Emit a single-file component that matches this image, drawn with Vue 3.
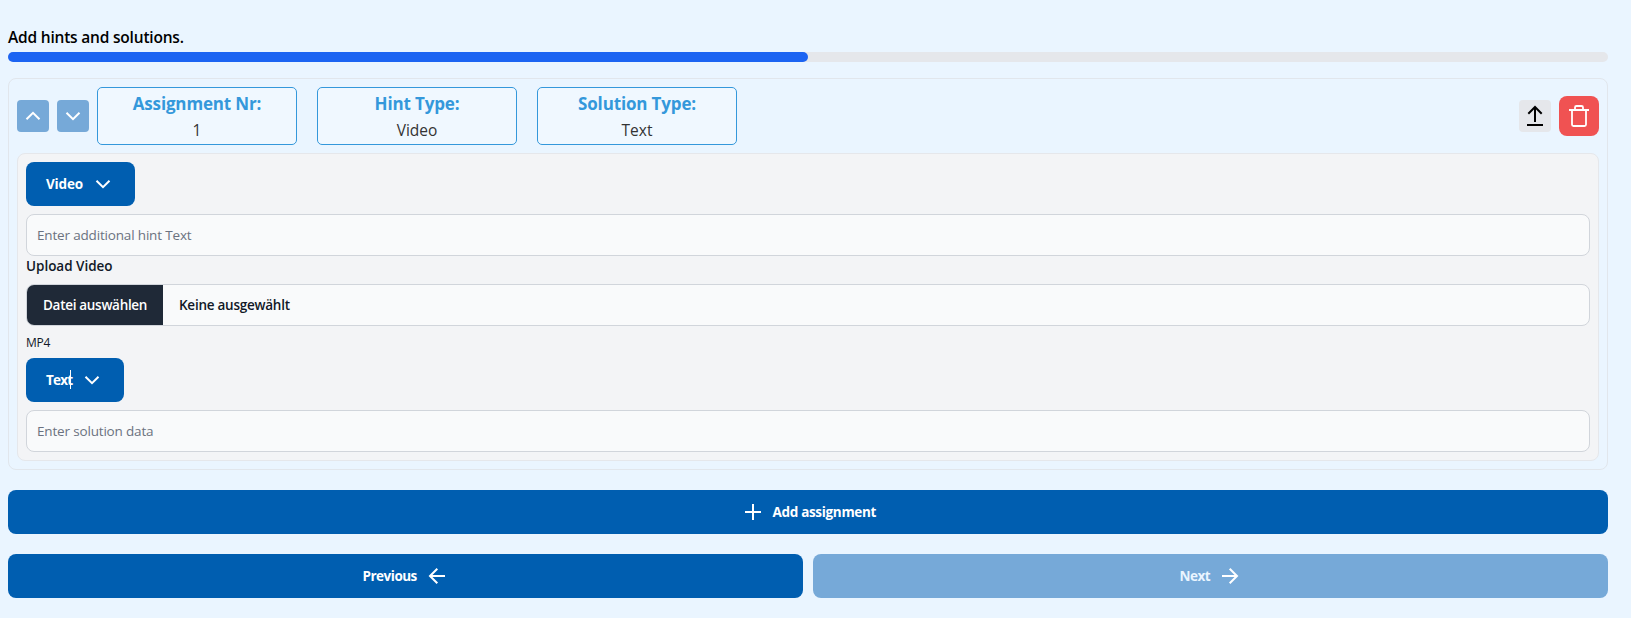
<script setup>
const summary = [
  { label: 'Assignment Nr:', value: '1' },
  { label: 'Hint Type:', value: 'Video' },
  { label: 'Solution Type:', value: 'Text' },
]
const progress = 50
</script>

<template>
  <main class="page">
    <h1 class="title"><span>Add hints and solutions.</span></h1>
    <div class="track"><div class="fill" :style="{ width: progress + '%' }"></div></div>

    <section class="card">
      <header class="head">
        <button class="sq" aria-label="Move up">
          <svg width="16" height="16" viewBox="0 0 16 16"><path d="M1.5 11.2 8 4.8l6.5 6.4" /></svg>
        </button>
        <button class="sq" aria-label="Move down">
          <svg width="16" height="16" viewBox="0 0 16 16"><path d="M1.5 4.8 8 11.2l6.5-6.4" /></svg>
        </button>
        <div class="boxes">
          <div v-for="s in summary" :key="s.label" class="box">
            <div class="label">{{ s.label }}</div>
            <div class="value">{{ s.value }}</div>
          </div>
        </div>
        <button class="sq upload" aria-label="Upload">
          <svg width="18" height="22" viewBox="0 0 18 22"><path d="M9 17V2.2M2.3 8.7 9 2l6.7 6.7M1 20h16" /></svg>
        </button>
        <button class="trash" aria-label="Delete">
          <svg width="22" height="24" viewBox="0 0 22 24"><path d="M1 6h20M4 6v14.5A1.5 1.5 0 0 0 5.5 22h11a1.5 1.5 0 0 0 1.5-1.5V6M7 5.8V3.5A1.5 1.5 0 0 1 8.5 2h5A1.5 1.5 0 0 1 15 3.5v2.3" /></svg>
        </button>
      </header>

      <div class="body">
        <button class="btn drop video">
          <span class="t-video">Video</span>
          <svg width="16" height="16" viewBox="0 0 16 16"><path d="M1.5 4.8 8 11.2l6.5-6.4" /></svg>
        </button>
        <div class="input">Enter additional hint Text</div>
        <div class="upload-label">Upload Video</div>
        <div class="file">
          <div class="choose">Datei auswählen</div>
          <span class="none">Keine ausgewählt</span>
        </div>
        <div class="format">MP4</div>
        <button class="btn drop text">
          <span class="t-text">Text<i class="caret"></i></span>
          <svg width="16" height="16" viewBox="0 0 16 16"><path d="M1.5 4.8 8 11.2l6.5-6.4" /></svg>
        </button>
        <div class="input">Enter solution data</div>
      </div>
    </section>

    <button class="btn wide add">
      <svg width="16" height="16" viewBox="0 0 16 16"><path d="M8 0v16M0 8h16" /></svg>
      <span class="t-add">Add assignment</span>
    </button>
    <nav class="nav">
      <button class="btn wide">
        <span class="t-prev">Previous</span>
        <svg width="16" height="16" viewBox="0 0 16 16"><path d="M16 8H1M8.3.7 1 8l7.3 7.3" /></svg>
      </button>
      <button class="btn wide off">
        <span class="t-next">Next</span>
        <svg width="16" height="16" viewBox="0 0 16 16"><path d="M0 8h15M7.7.7 15 8l-7.3 7.3" /></svg>
      </button>
    </nav>
  </main>
</template>

<style>
html, body { background: #eaf5ff; }
body { overflow: hidden; }
</style>

<style scoped>
* { box-sizing: border-box; }
.page {
  width: 1616px; height: 618px; padding: 24px 8px 0;
  font-family: "Open Sans", "Noto Sans", sans-serif; font-size: 14px; color: #111827;
}
span { white-space: nowrap; }
button { border: 0; margin: 0; padding: 0; font: inherit; color: inherit; display: flex; align-items: center; justify-content: center; }
svg { display: block; flex: none; fill: none; stroke: #fff; stroke-width: 2; overflow: visible; }
.title { margin: 0; height: 28px; font-size: 15.5px; line-height: 26px; font-weight: 600; color: #000; letter-spacing: -0.2px; }
.track { height: 10px; border-radius: 5px; background: #e5e7eb; }
.fill { height: 10px; border-radius: 5px; background: #1c64f2; }
.card { margin-top: 16px; height: 392px; border: 1px solid #e1e6ec; border-radius: 8px; padding: 8px; }
.head { display: flex; align-items: center; gap: 8px; height: 58px; }
.sq { width: 32px; height: 32px; border-radius: 4px; background: #76a9d8; }
.boxes { display: flex; gap: 20px; flex: 1; }
.box { width: 200px; height: 58px; border: 1px solid #3498db; border-radius: 5px; background: #f0f8ff; text-align: center; }
.label { height: 30px; line-height: 32px; font-size: 17px; font-weight: 700; color: #3498db; letter-spacing: -0.15px; }
.value { height: 26px; line-height: 25px; font-size: 15.5px; color: #333; }
.upload { background: #e5e7eb; }
.upload svg { stroke: #000; }
.trash { width: 40px; height: 40px; border-radius: 8px; background: #f05252; }
.trash svg { stroke-width: 1.8; }
.body { margin-top: 8px; height: 308px; border: 1px solid #e5e7eb; border-radius: 8px; background: #f3f4f6; padding: 8px; }
.btn { height: 44px; border-radius: 8px; background: #005eb0; color: #fff; font-size: 13.5px; font-weight: 700; letter-spacing: -0.35px; line-height: 20px; }
.drop { justify-content: flex-start; padding-left: 20px; }
.video { width: 109px; }
.text { width: 98px; }
.drop svg { margin-left: 12px; }
.t-video { width: 37px; text-align: left; letter-spacing: -0.15px; }
.t-text { width: 26px; text-align: left; position: relative; letter-spacing: -0.8px; }
.caret { position: absolute; left: 24px; top: 0; width: 1px; height: 19px; background: #fff; }
.input { margin-top: 8px; height: 42px; border: 1px solid #d1d5db; border-radius: 8px; background: #f9fafb; padding-left: 10px; line-height: 41px; font-size: 13.5px; color: #6b7280; letter-spacing: -0.17px; }
.upload-label { height: 28px; line-height: 21px; font-weight: 600; font-size: 13.5px; letter-spacing: -0.02px; }
.file { display: flex; align-items: center; height: 42px; border: 1px solid #d1d5db; border-radius: 8px; background: #f9fafb; overflow: hidden; font-size: 13.5px; font-weight: 600; letter-spacing: -0.25px; }
.choose { width: 136px; height: 40px; line-height: 40px; padding-left: 16px; margin-right: 16px; background: #1f2937; color: #fff; white-space: nowrap; letter-spacing: -0.3px; }
.none { line-height: 40px; }
.format { height: 32px; line-height: 33px; font-size: 12px; letter-spacing: -0.2px; }
.wide { width: 100%; gap: 12px; }
.t-add { width: 104px; text-align: left; letter-spacing: -0.32px; }
.t-prev { width: 54px; text-align: left; letter-spacing: -0.5px; }
.t-next { width: 30px; text-align: left; letter-spacing: -0.5px; }
.add { margin-top: 20px; padding-left: 5px; }
.nav { display: flex; gap: 10px; margin-top: 20px; }
.nav .wide { flex: 1; padding-right: 4px; }
.off { background: #76a9d8; color: #eaf5ff; }
</style>
